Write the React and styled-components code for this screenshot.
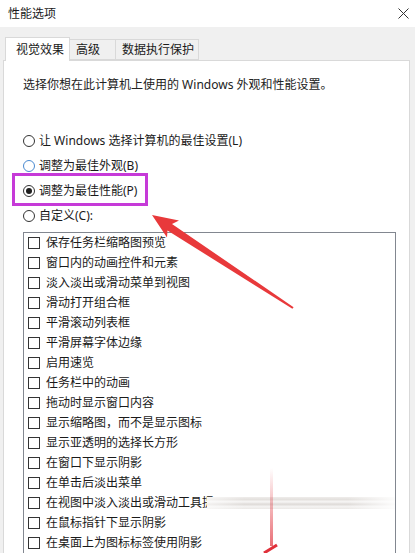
import React from 'react';
import styled, { createGlobalStyle } from 'styled-components';

const Global = createGlobalStyle`
  html, body { margin: 0; padding: 0; background: #f0f0f0; }
  body {
    font-family: "Segoe UI", "Noto Sans", "Noto Sans CJK SC", sans-serif;
    font-size: 12px;
    color: #1a1a1a;
  }
  * { box-sizing: border-box; }
`;

const Window = styled.div`
  position: relative;
  width: 415px;
  height: 553px;
  overflow: hidden;
  background: #f0f0f0;
  display: flex;
  flex-direction: column;
`;

const TitleBar = styled.div`
  height: 27px;
  flex: none;
  background: #fff;
  display: flex;
  align-items: center;
  justify-content: space-between;
  padding: 0 4px 0 8px;
`;

const Title = styled.span`
  font-size: 12px;
  line-height: 16px;
  color: #1a1a1a;
`;

const Close = styled.div`
  width: 16px;
  height: 16px;
  display: flex;
  align-items: center;
  justify-content: center;
`;

const Body = styled.div`
  flex: 1;
  min-height: 0;
  display: flex;
  flex-direction: column;
  padding: 10px 5px 0 3px;
`;

const Tabs = styled.div`
  display: flex;
  align-items: flex-end;
  padding-left: 2px;
  position: relative;
  z-index: 1;
`;

const Tab = styled.div`
  width: ${p => p.$w}px;
  height: ${p => (p.$active ? 24 : 21)}px;
  margin-bottom: ${p => (p.$active ? -1 : 0)}px;
  padding-left: ${p => (p.$active ? 10 : 6)}px;
  display: flex;
  align-items: center;
  background: ${p => (p.$active ? '#fff' : '#f0f0f0')};
  border: 1px solid #d9d9d9;
  border-bottom: ${p => (p.$active ? 'none' : '1px solid #d9d9d9')};
  margin-left: ${p => (p.$first ? 0 : -1)}px;
  font-size: 12px;
  line-height: 16px;
  color: #1a1a1a;
  white-space: nowrap;
`;

const Panel = styled.div`
  flex: 1;
  min-height: 0;
  background: #fff;
  border: 1px solid #d9d9d9;
  border-bottom: none;
  padding: 16px 0 0 19px;
  display: flex;
  flex-direction: column;
`;

const Description = styled.div`
  font-size: 12px;
  line-height: 16px;
  color: #222;
  white-space: nowrap;
`;

const RadioGroup = styled.div`
  margin-top: 35px;
  display: flex;
  flex-direction: column;
`;

const RadioRow = styled.div`
  height: 25px;
  display: flex;
  align-items: center;
  gap: 4px;
  font-size: 12px;
  line-height: 16px;
  color: #1a1a1a;
  white-space: nowrap;
`;

const RadioCircle = styled.span`
  width: 12px;
  height: 12px;
  flex: none;
  border-radius: 50%;
  border: 1px solid ${p => (p.$focus ? '#4a8ad0' : '#333')};
  background: #fff;
  display: flex;
  align-items: center;
  justify-content: center;
  &::after {
    content: '';
    display: ${p => (p.$checked ? 'block' : 'none')};
    width: 6px;
    height: 6px;
    border-radius: 50%;
    background: #1f1f1f;
  }
`;

const ListBox = styled.div`
  margin-top: 4px;
  width: 373px;
  flex: 1;
  border: 1px solid #828790;
  border-bottom: none;
  padding-left: 4px;
  display: flex;
  flex-direction: column;
  overflow: hidden;
`;

const Item = styled.div`
  height: 20px;
  flex: none;
  display: flex;
  align-items: center;
  gap: 6px;
  font-size: 12px;
  line-height: 16px;
  color: #1a1a1a;
  white-space: nowrap;
`;

const CheckBox = styled.span`
  width: 12px;
  height: 12px;
  flex: none;
  border: 1px solid #333;
  background: #fff;
`;

const Highlight = styled.div`
  position: absolute;
  left: 12px;
  top: 173px;
  width: 136px;
  height: 33px;
  border: 3px solid #c63ad8;
  pointer-events: none;
`;

const Annotations = styled.svg`
  position: absolute;
  left: 0;
  top: 0;
  pointer-events: none;
`;

const WatermarkBand = styled.div`
  position: absolute;
  left: 207px;
  top: 497px;
  width: 188px;
  height: 12px;
  background:
    linear-gradient(to right, rgba(255,255,255,0.6), rgba(255,255,255,0) 20%, rgba(255,255,255,0) 75%, rgba(255,255,255,0.9)),
    linear-gradient(to bottom, #efedeb 0%, #e3e0dd 20%, #f7f6f5 40%, #dedad7 60%, #f4f3f2 80%, #ebe8e6 100%);
  pointer-events: none;
`;

const items = [
  '保存任务栏缩略图预览',
  '窗口内的动画控件和元素',
  '淡入淡出或滑动菜单到视图',
  '滑动打开组合框',
  '平滑滚动列表框',
  '平滑屏幕字体边缘',
  '启用速览',
  '任务栏中的动画',
  '拖动时显示窗口内容',
  '显示缩略图，而不是显示图标',
  '显示亚透明的选择长方形',
  '在窗口下显示阴影',
  '在单击后淡出菜单',
  '在视图中淡入淡出或滑动工具提示',
  '在鼠标指针下显示阴影',
  '在桌面上为图标标签使用阴影',
];

const radios = [
  { label: '让 Windows 选择计算机的最佳设置(L)' },
  { label: '调整为最佳外观(B)', focus: true },
  { label: '调整为最佳性能(P)', checked: true },
  { label: '自定义(C):' },
];

export default function App() {
  return (
    <Window>
      <Global />
      <TitleBar>
        <Title>性能选项</Title>
        <Close>
          <svg width="11" height="11" viewBox="0 0 11 11">
            <path d="M0.5 0.5 L10.5 10.5 M10.5 0.5 L0.5 10.5" stroke="#333" strokeWidth="1" fill="none" />
          </svg>
        </Close>
      </TitleBar>
      <Body>
        <Tabs>
          <Tab $active $first $w={65}>视觉效果</Tab>
          <Tab $w={47}>高级</Tab>
          <Tab $w={84}>数据执行保护</Tab>
        </Tabs>
        <Panel>
          <Description>选择你想在此计算机上使用的 Windows 外观和性能设置。</Description>
          <RadioGroup>
            {radios.map(r => (
              <RadioRow key={r.label}>
                <RadioCircle $checked={r.checked} $focus={r.focus} />
                <span>{r.label}</span>
              </RadioRow>
            ))}
          </RadioGroup>
          <ListBox>
            {items.map(t => (
              <Item key={t}>
                <CheckBox />
                <span>{t}</span>
              </Item>
            ))}
          </ListBox>
        </Panel>
      </Body>
      <Highlight />
      <WatermarkBand />
      <Annotations width="415" height="553" viewBox="0 0 415 553">
        <defs>
          <linearGradient id="fade" x1="0" y1="0" x2="0" y2="1">
            <stop offset="0" stopColor="#e0303a" stopOpacity="0" />
            <stop offset="0.5" stopColor="#e0303a" stopOpacity="0.35" />
            <stop offset="1" stopColor="#e0303a" stopOpacity="0.7" />
          </linearGradient>
        </defs>
        <polygon
          points="152,215 179,220.5 172,224 293.6,307.2 292.4,308.8 167.5,230.5 167,237.5"
          fill="#e8393b"
        />
        <rect x="270" y="468" width="3" height="78" fill="url(#fade)" />
        <path d="M264 553 L277 545" stroke="#e0303a" strokeWidth="3" />
      </Annotations>
    </Window>
  );
}
